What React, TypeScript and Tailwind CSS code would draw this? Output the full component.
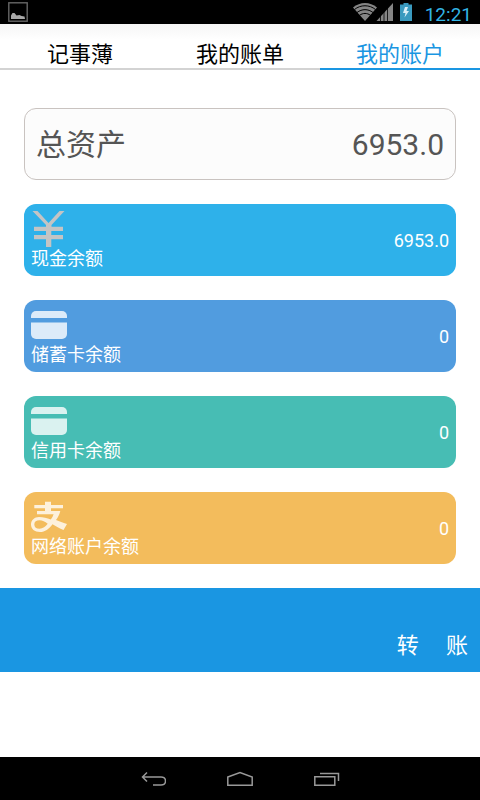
import clsx from 'clsx'

const tabs = [
  { id: 1, name: '记事薄' },
  { id: 2, name: '我的账单' },
  { id: 3, name: '我的账户' },
]

const YenIcon = () => (
  <svg viewBox="0 1 36 36" className="h-9 w-9 overflow-visible fill-[#c4c4c4]">
    <path d="M1.500 1h5l11 12 11-12h5L20.500 15v1.700H32V21H20.300v4H32v4.300H20.300V37H15v-7.700H3V25h12v-4H3v-4.300h12V15z" />
  </svg>
)

const CardIcon = () => (
  <svg viewBox="0 1 36 36" className="h-9 w-9 fill-white/80">
    <path d="M5 5h26a5 5 0 0 1 5 5v2H0v-2a5 5 0 0 1 5-5z" />
    <path d="M0 16.500h36V28a5 5 0 0 1-5 5H5a5 5 0 0 1-5-5z" />
  </svg>
)

const AlipayIcon = () => (
  <svg viewBox="0 1 36 36" className="h-9 w-9 fill-[#fdf1dc]">
    <path d="M14 3.700h6V7h12v3.300H20V13h9.300c-.8 3.200-2.300 6.300-4.300 9 3.300 1.400 6.800 2.700 11 4.100L32.500 32c-4-1.600-7.600-3.700-11-5.800C18 31 14 34 9 34c-5.500 0-9-2.900-9-7.400C0 22.200 3.400 19 8 19c4.300 0 8 1 11.800 2.500 1.300-1.700 2.200-3.300 2.800-5.200H6V13h8v-2.700H3.300V7H14zM8.500 22.300c-3.200 0-5.200 1.500-5.200 4.100s2 4.300 5.200 4.300c3.400 0 6-2 8.200-4.900-2.700-2-5.200-3.500-8.200-3.500z" />
  </svg>
)

const accounts = [
  { id: 1, name: '现金余额', value: '6953.0', color: 'bg-[#2eb1ea]', icon: YenIcon },
  { id: 2, name: '储蓄卡余额', value: '0', color: 'bg-[#519cdf]', icon: CardIcon },
  { id: 3, name: '信用卡余额', value: '0', color: 'bg-[#47bdb4]', icon: CardIcon },
  { id: 4, name: '网络账户余额', value: '0', color: 'bg-[#f3bc5c]', icon: AlipayIcon },
]

const StatusBar = () => (
  <div className="flex h-6 items-center justify-between bg-black px-2">
    <svg viewBox="0 0 20 20" className="h-5 w-5">
      <rect x="0.800" y="0.800" width="18.400" height="18.400" fill="none" stroke="#666" strokeWidth="1.400" />
      <path d="M3 17v-3.500l1.500-2.500h2l2 2.500 3-.5 2 1 3 .5.500 2.500z" fill="#a8a8a8" />
    </svg>
    <div className="flex items-center">
      <svg viewBox="0 0 60 20" className="mr-3 h-5 w-15">
        <path d="M12 19 0 5.500C7-.5 17-.5 24 5.500z" fill="#858585" />
        <g fill="none" stroke="#000" strokeWidth="1">
          <path d="M1.500 7.500c6-5 15-5 21 0" />
          <path d="M4 10.500c5-3.800 11-3.800 16 0" />
          <path d="M6.500 13.300c3.500-2.500 7.500-2.500 11 0" />
        </g>
        <path d="M23.500 19 40 1v18z" fill="#858585" />
        <path d="M27.500 10v9M31 7v12M34.500 4v15" stroke="#000" strokeWidth="0.800" />
        <path d="M47 2.500h3.500V1h5v1.500H59V19H47z" fill="#3a9abf" />
        <path d="m52 5-2 6h2.500l-1 4.500 4.500-6.500h-2.500L55 5z" fill="#d8eef6" />
      </svg>
      <span className="pt-1.5 text-[19px] leading-5 text-[#33b5e5]">12:21</span>
    </div>
  </div>
)

const NavigationBar = () => (
  <nav className="flex h-[43px] items-center justify-center gap-[61px] bg-black">
    <button aria-label="Back">
      <svg viewBox="0 0 26 16" className="h-4 w-[26px] fill-none stroke-[#999] stroke-[1.500]">
        <path d="M7 1.500 2.500 6 7 10.500M2.500 6H21c6 0 6 8 0 8h-8" />
      </svg>
    </button>
    <button aria-label="Home">
      <svg viewBox="0 0 26 16" className="h-4 w-[26px] fill-none stroke-[#999] stroke-[1.500]">
        <path d="M.8 6 13 1.500 25.200 6v8.300H.8z" />
      </svg>
    </button>
    <button aria-label="Recent apps">
      <svg viewBox="0 0 26 16" className="h-4 w-[26px] fill-none stroke-[#999] stroke-[1.500]">
        <path d="M.8 5.800h20v8.500H.8zM6 2.500h18.500V10" />
      </svg>
    </button>
  </nav>
)

export default function App() {
  return (
    <div className="flex min-h-screen flex-col bg-white font-[Roboto,'Noto_Sans_CJK_SC',sans-serif]">
      <StatusBar />

      {/* tabs section */}
      <div className="grid grid-cols-3 bg-linear-to-b from-[#f6f6f6] to-white to-35%">
        {tabs.map((tab) => {
          const isActive = tab.id === 3
          return (
            <button
              key={tab.id}
              className={clsx(
                'border-b-2 pt-[19px] pb-px text-[22px] leading-6',
                isActive ? 'border-[#1a96e2] text-[#1a96e2]' : 'border-[#d3d3d3] text-black',
              )}
            >
              {tab.name}
            </button>
          )
        })}
      </div>

      {/* accounts section */}
      <main className="flex flex-col gap-6 px-6 pt-[38px] pb-6">
        <div className="flex h-18 items-center justify-between rounded-xl border border-[#c9c3c0] bg-[#fcfcfc] px-[11px] pt-0.5 text-3xl text-[#555]">
          <span>总资产</span>
          <span>6953.0</span>
        </div>
        {accounts.map((account) => (
          <div
            key={account.id}
            className={clsx(
              'flex items-center justify-between rounded-xl px-[7px] pt-[7px] pb-[5px] text-lg leading-6 text-white',
              account.color,
            )}
          >
            <div>
              <account.icon />
              <p>{account.name}</p>
            </div>
            <span>{account.value}</span>
          </div>
        ))}
      </main>

      {/* transfer section */}
      <div className="flex h-21 items-end justify-end bg-[#1a96e2] px-3 pb-2.5">
        <button className="text-[22px] leading-8 whitespace-pre text-white">{'转     账'}</button>
      </div>

      <div className="mt-auto">
        <NavigationBar />
      </div>
    </div>
  )
}
